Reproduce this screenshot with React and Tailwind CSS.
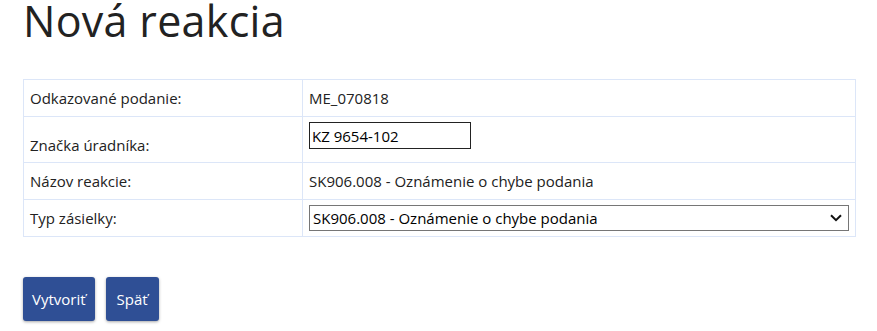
export default function App() {
  const font = { fontFamily: '"Open Sans", "Noto Sans", sans-serif' };
  return (
    <div className="bg-white w-[877px] h-[331px] pl-[23px] text-[#222]" style={font}>
      <h1 className="m-0 text-[43px] leading-[41px] font-normal text-[#222] tracking-[0.3px]">Nová reakcia</h1>
      <table className="mt-[38px] w-[833px] border-collapse text-[15px] leading-[20px]">
        <tbody>
          <tr className="h-[37px]">
            <td className="w-[279px] border border-[#dce6f8] px-[6px] align-middle">Odkazované podanie:</td>
            <td className="border border-[#dce6f8] px-[6px] align-middle">ME_070818</td>
          </tr>
          <tr className="h-[46px]">
            <td className="border border-[#dce6f8] px-[6px] pb-[7px] align-bottom">Značka úradníka:</td>
            <td className="border border-[#dce6f8] px-[6px] align-top pt-[5px]">
              <input
                type="text"
                defaultValue="KZ 9654-102"
                className="w-[162px] h-[27px] border border-[#222] px-[2px] text-[15px] text-black outline-none"
                style={font}
              />
            </td>
          </tr>
          <tr className="h-[37px]">
            <td className="border border-[#dce6f8] px-[6px] align-middle">Názov reakcie:</td>
            <td className="border border-[#dce6f8] px-[6px] align-middle">SK906.008 - Oznámenie o chybe podania</td>
          </tr>
          <tr className="h-[37px]">
            <td className="border border-[#dce6f8] px-[6px] align-middle">Typ zásielky:</td>
            <td className="border border-[#dce6f8] pl-[6px] pr-[6px] align-middle">
              <div className="relative w-[540px] h-[26px] border border-[#767676] bg-white flex items-center">
                <span className="pl-[3px] text-[15px] text-black">SK906.008 - Oznámenie o chybe podania</span>
                <svg className="absolute right-[6px] top-[8px]" width="12" height="8" viewBox="0 0 12 8" fill="none">
                  <path d="M1 1.2 L6 6.2 L11 1.2" stroke="#111" strokeWidth="2" />
                </svg>
              </div>
            </td>
          </tr>
        </tbody>
      </table>
      <div className="mt-[40px] flex gap-[11px]">
        <button className="h-[44px] px-[9px] bg-[#2f4f95] text-white text-[15px] rounded-[3px] shadow-[0_1px_3px_rgba(0,0,0,0.35)]" style={font}>
          Vytvoriť
        </button>
        <button className="h-[44px] px-[11px] bg-[#2f4f95] text-white text-[15px] rounded-[3px] shadow-[0_1px_3px_rgba(0,0,0,0.35)]" style={font}>
          Späť
        </button>
      </div>
    </div>
  );
}
